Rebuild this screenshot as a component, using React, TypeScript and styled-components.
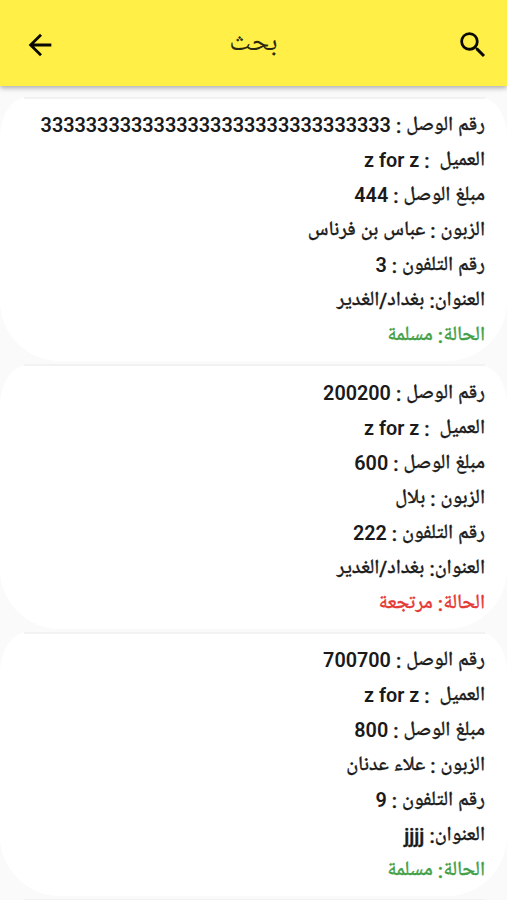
import React from "react";
import styled, { createGlobalStyle } from "styled-components";

const Global = createGlobalStyle`
  html, body { margin: 0; padding: 0; background: #fafafa; }
  * { box-sizing: border-box; }
`;

const Screen = styled.div`
  width: 507px;
  height: 900px;
  overflow: hidden;
  display: flex;
  flex-direction: column;
  background: #fafafa;
  color: #1a1a1a;
  font-family: Roboto, "Noto Naskh Arabic UI", "Noto Naskh Arabic", "DejaVu Sans", sans-serif;
`;

const AppBar = styled.header`
  position: relative;
  z-index: 1;
  flex: none;
  height: 86px;
  padding: 4px 17px 0 23px;
  display: flex;
  align-items: center;
  justify-content: space-between;
  background: #ffef46;
  box-shadow: 0 2px 5px rgba(0, 0, 0, 0.32);
`;

const Title = styled.h1`
  margin: 0 6px 0 0;
  font-size: 27.5px;
  font-weight: 400;
  line-height: 34px;
  color: #2b2810;
`;

const IconButton = styled.button`
  display: flex;
  padding: 0;
  border: 0;
  background: none;
  color: #0b0a02;
`;

const List = styled.main`
  flex: 1;
  padding-top: 11px;
`;

const Card = styled.article`
  height: 264px;
  margin-bottom: 3.55px;
  padding: 11px 22px 0;
  background: #fff;
  border-radius: 28px 28px 60px 60px / 40px 40px 60px 60px;
  position: relative;
  &::before {
    content: "";
    position: absolute;
    top: -0.5px;
    left: 24px;
    right: 22px;
    height: 2px;
    background: #f2f2f2;
  }
`;

const Line = styled.p<{ $color?: string }>`
  margin: 0;
  height: 35px;
  line-height: 35px;
  font-size: 19.8px;
  font-weight: 500;
  white-space: pre;
  color: ${(p) => p.$color ?? "inherit"};
`;

const Arabic = styled.span`
  line-height: 1;
  font-size: 20.1px;
  vertical-align: -1px;
  -webkit-text-stroke: 0.35px currentColor;
`;

const Value = styled.span`
  line-height: 1;
  font-weight: 600;
`;

const green = "#43a047";
const red = "#e53935";

const receipts = [
  { no: "3".repeat(31), amount: "444", customer: "عباس بن فرناس", phone: "3", address: "بغداد/الغدير", status: "مسلمة", color: green },
  { no: "200200", amount: "600", customer: "بلال", phone: "222", address: "بغداد/الغدير", status: "مرتجعة", color: red },
  { no: "700700", amount: "800", customer: "علاء عدنان", phone: "9", address: "jjjj", status: "مسلمة", color: green },
];

export default function App() {
  return (
    <Screen dir="rtl">
      <Global />
      <AppBar>
        <IconButton aria-label="بحث">
          <svg width="34" height="34" viewBox="0 0 24 24" fill="currentColor">
            <path d="M15.5 14h-.79l-.28-.27A6.47 6.47 0 0 0 16 9.5 6.5 6.5 0 1 0 9.5 16c1.61 0 3.09-.59 4.23-1.57l.27.28v.79l5 4.99L20.49 19zm-6 0C7.01 14 5 11.99 5 9.5S7.01 5 9.5 5 14 7.01 14 9.5 11.99 14 9.5 14z" />
          </svg>
        </IconButton>
        <Title>بحث</Title>
        <IconButton aria-label="رجوع">
          <svg width="34" height="34" viewBox="0 0 24 24" fill="currentColor">
            <path d="M20 11H7.83l5.59-5.59L12 4l-8 8 8 8 1.41-1.41L7.83 13H20z" />
          </svg>
        </IconButton>
      </AppBar>
      <List>
        {receipts.map((r) => (
          <Card key={r.no}>
            <Line><Arabic>رقم الوصل : </Arabic><Value>{r.no}</Value></Line>
            <Line><Arabic>العميل{"  "}: </Arabic><Value>z for z</Value></Line>
            <Line><Arabic>مبلغ الوصل : </Arabic><Value>{r.amount}</Value></Line>
            <Line><Arabic>الزبون : {r.customer}</Arabic></Line>
            <Line><Arabic>رقم التلفون : </Arabic><Value>{r.phone}</Value></Line>
            <Line><Arabic>العنوان: {r.address}</Arabic></Line>
            <Line $color={r.color}><Arabic>الحالة: {r.status}</Arabic></Line>
          </Card>
        ))}
        <Card />
      </List>
    </Screen>
  );
}
